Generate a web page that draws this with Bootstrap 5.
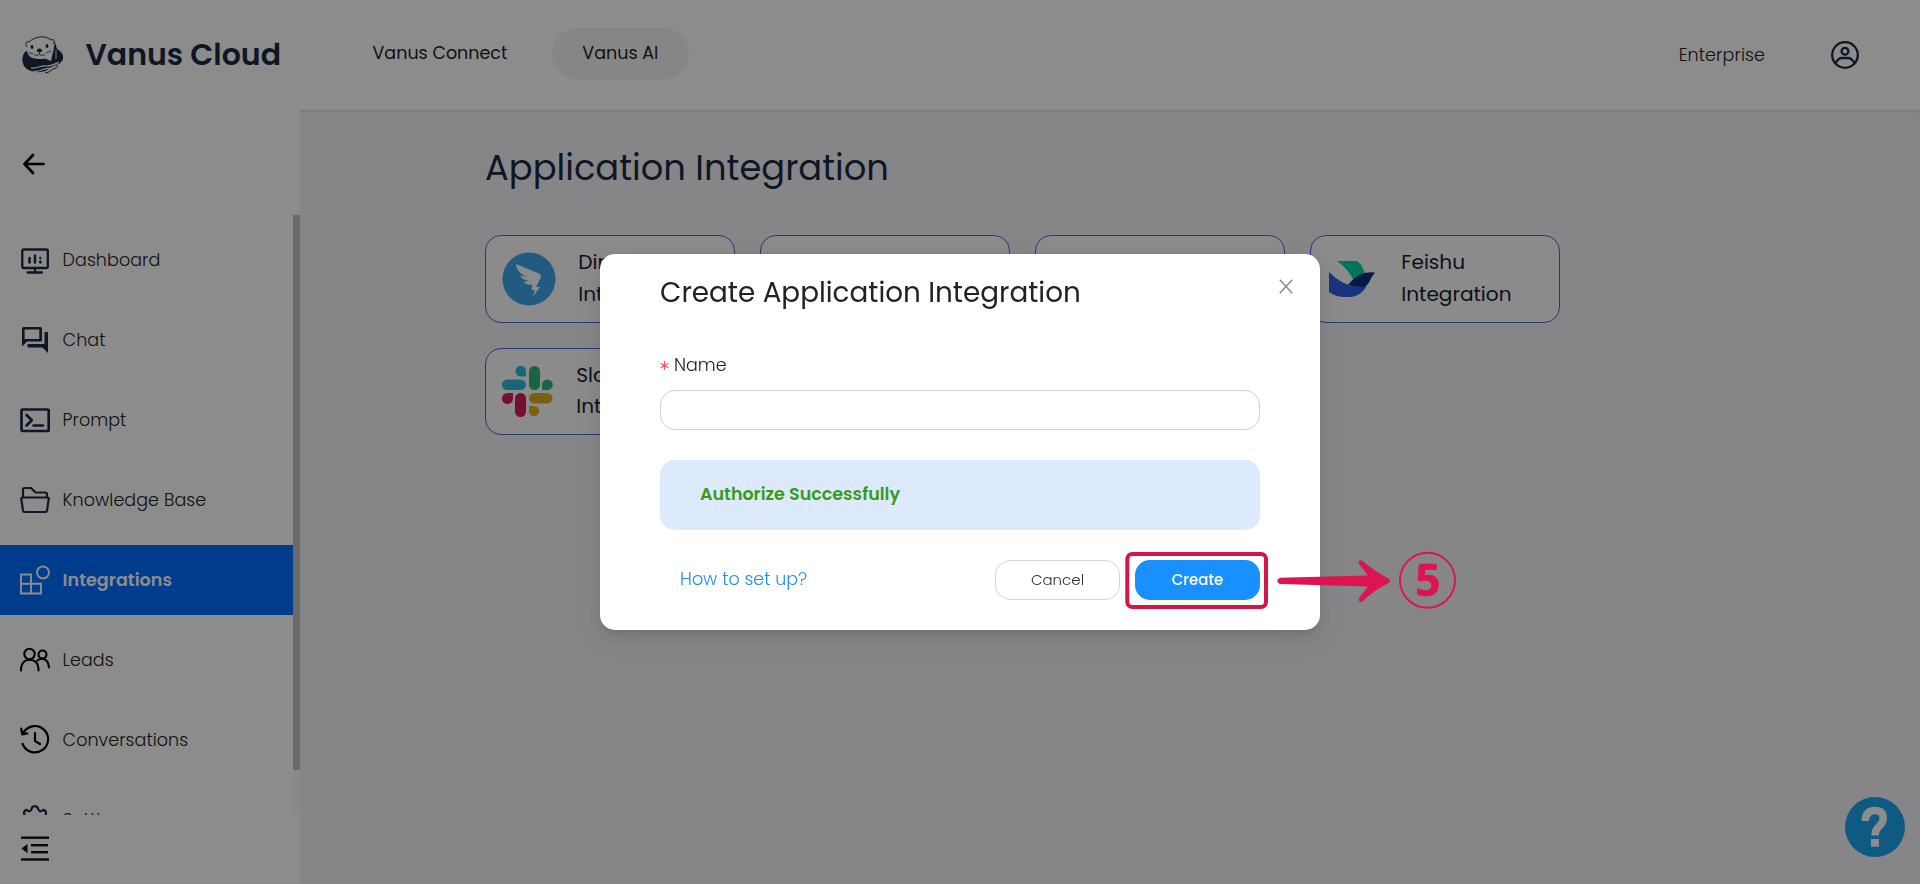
<!DOCTYPE html>
<html lang="en">
<head>
<meta charset="utf-8">
<meta name="viewport" content="width=device-width, initial-scale=1">
<title>Vanus Cloud – Application Integration</title>
<link href="https://cdn.jsdelivr.net/npm/bootstrap@5.3.0/dist/css/bootstrap.min.css" rel="stylesheet">
<style>
  :root { --ink: #1d2a44; }
  body { font-family: Poppins, Inter, "Liberation Sans", sans-serif; font-size: 17.5px; height: 884px; overflow: hidden; background: #f5f5f9; color: #222; }
  svg { display: block; flex: none; }

  /* header */
  .topbar { height: 110px; background: #fff; padding: 0 61px 0 21px; }
  .main-shade { box-shadow: inset 0 3px 3px -1px rgba(0,0,0,.08); }
  .brand-name { font-size: 30px; font-weight: 600; color: var(--ink); margin-left: 21.5px; line-height: 36px; }
  .top-link { color: #222; text-decoration: none; line-height: 26px; }
  .tl-connect { margin-left: 91.5px; margin-top: -4px; }
  .tl-ai { margin-left: 44.5px; margin-top: -3px; width: 137px; height: 51px; border-radius: 26px; background: #f4f4f4; padding-bottom: 1px; }
  .tl-ent { margin-right: 66px; font-weight: 300; letter-spacing: .1px; }

  /* sidebar */
  .side { width: 300px; background: #fff; }
  .back-btn { height: 105px; padding: 3px 0 0 22px; }
  .side-scroll { height: 600px; overflow: hidden; }
  .side-list { width: 293px; padding-top: 10px; gap: 10px; }
  .side-item { height: 70px; flex: none; padding-left: 20px; gap: 12.6px; font-weight: 300; letter-spacing: .06px; color: #222; text-decoration: none; }
  .side-item svg { width: 30px; height: 30px; color: var(--ink); }
  .side-item.dark-ico svg { color: #000; }
  .side-item.current { background: #006dff; color: #fff; font-weight: 600; }
  .side-item.current svg { color: #fff; }
  .track { width: 7px; background: #fafafa; }
  .thumb { height: 555px; background: #c1c1c1; }
  .side-foot { padding: 21px 0 0 21px; }

  /* content */
  .page-area { padding: 33px 0 0 185px; }
  .page-title { font-size: 35.3px; font-weight: 400; line-height: 50px; color: var(--ink); margin: 0; }
  .app-grid { display: grid; grid-template-columns: repeat(4, 250px); gap: 25px; margin-top: 42px; }
  .app-tile { height: 88px; border: 1px solid #4a66e0; border-radius: 16px; background: #fdfdfd; color: #16202f; font-size: 20.1px; line-height: 31.6px; padding: 0 16px 1px; }
  .app-tile .nm { width: 130px; margin-left: 22.3px; }
  .app-tile.short { height: 87px; line-height: 31px; }
  .feishu-mark { margin: 0 2px; }

  /* dialog */
  .modal-backdrop.veil { background: #000; opacity: .45; width: 100%; height: 100%; }
  .modal-dialog.create-dlg { max-width: 720px; width: 720px; margin: 254px 0 0 600px; }
  .create-dlg .modal-content { height: 376px; border: 0; border-radius: 15px; padding: 20px 60px 30px; box-shadow: 0 9px 28px 8px rgba(0,0,0,.06), 0 6px 16px rgba(0,0,0,.09), 0 3px 6px -4px rgba(0,0,0,.12); }
  .dlg-title { font-size: 27.8px; font-weight: 400; line-height: 38px; color: #222; margin: 0; }
  .x-btn { width: 14px; height: 15px; margin: 5px -33px 0 0; color: #8a8a8a; }
  .fld-label { margin: 40px 0 11px; height: 27px; line-height: 27px; font-weight: 300; gap: 5px; color: #222; }
  .fld { height: 40px; border: 1px solid #d0d0d0; border-radius: 15px; }
  .fld:focus { box-shadow: none; }
  .ok-note { height: 70px; margin: 30px 0 0; padding: 0 40px 2px; border: 0; border-radius: 15px; background: #dde9fc; color: #389a1a; font-weight: 600; }
  .dlg-foot { margin-top: 30px; gap: 15px; }
  .how { color: #1e8cf0; text-decoration: none; font-weight: 300; padding: 0 0 1px 20px; }
  .dlg-btn { width: 125px; height: 40px; border-radius: 15px; font-size: 15px; padding: 0; }
  .dlg-btn.cxl { background: #fff; border: 1px solid #d4d4d4; color: #333; font-weight: 300; }
  .dlg-btn.mk { background: #1890ff; border: 0; color: #fff; font-weight: 500; }

  /* overlays */
  .help-fab { position: absolute; left: 1845px; top: 797px; }
  .callout { position: absolute; left: 1120px; top: 545px; z-index: 1100; }
</style>
<script src="https://cdn.jsdelivr.net/npm/bootstrap@5.3.0/dist/js/bootstrap.bundle.min.js"></script>
</head>
<body class="d-flex flex-column">

<header class="topbar d-flex align-items-center">
  <svg width="43" height="40" viewBox="0 0 43 40">
    <path d="M5 16C0 20 0 30 6 34C14 39 24 38 31 32C36 30 43 28 42 21C41 17 38 15 36 14L34 7L30 26Z" fill="#1d2a44"/>
    <path d="M6.500 14C6 9 9 6 13 4C18 1 25 2 29 5C33 8 33 13 32 17C30 22 24 24.500 18 24C10 24 5 20 6.500 14Z" fill="#fff"/>
    <path d="M6 12C4 9 5 6 8 7C14 1 25 0 30 5C33 4 35 6 32 9" fill="none" stroke="#1d2a44"/>
    <path d="M35 15V24" fill="none" stroke="#fff" stroke-width=".8"/>
    <ellipse cx="11" cy="12" rx="1.400" ry="2" fill="#1d2a44"/><ellipse cx="26" cy="11" rx="1.400" ry="2" fill="#1d2a44"/>
    <ellipse cx="18.500" cy="15.500" rx="2.600" ry="2" fill="#1d2a44"/>
    <path d="M18.500 17.500V19.500M13 19.500Q16 21.500 18.500 19.500Q21 21.500 24 19.500M8 18L12 18.500M25 18L30 16" fill="none" stroke="#1d2a44" stroke-width=".8"/>
    <path d="M10 33C17 34 19 30 26 31C31 31 34 29 38 27M12 36C19 38 21 33 28 33.500C32 33 35 31 38 29" fill="none" stroke="#fff" stroke-width="1.200"/>
    <path d="M24 38C29 38 30 34 35 33L37 30" fill="none" stroke="#1d2a44"/>
  </svg>
  <span class="brand-name">Vanus Cloud</span>
  <nav class="d-flex align-items-center">
    <a class="top-link tl-connect" href="#">Vanus Connect</a>
    <a class="top-link tl-ai d-flex align-items-center justify-content-center" href="#">Vanus AI</a>
  </nav>
  <a class="top-link tl-ent ms-auto" href="#">Enterprise</a>
  <svg width="28" height="28" viewBox="0 0 28 28" fill="none" stroke="#1d2a44" stroke-width="2.300">
    <circle cx="14" cy="14" r="12.800"/><circle cx="14" cy="10.300" r="3.400"/><path d="M4.500 22C6.500 18.500 9 17 11 17H17C19 17 21.500 18.500 23.500 22"/>
  </svg>
</header>

<div class="d-flex flex-grow-1">
  <aside class="side d-flex flex-column">
    <div class="back-btn d-flex align-items-center">
      <svg width="24" height="22" viewBox="0 0 24 22" fill="none" stroke="#000" stroke-width="2.700" stroke-linecap="round" stroke-linejoin="round"><path d="M11 2L2.500 11L11 20M2.500 11H21.500"/></svg>
    </div>
    <div class="side-scroll d-flex">
      <nav class="side-list d-flex flex-column">
        <a class="side-item d-flex align-items-center" href="#">
          <svg viewBox="0 0 30 30" fill="none" stroke="currentColor" stroke-width="2.300" stroke-linecap="round"><rect x="2.300" y="4.500" width="25.500" height="18.500" rx="1.500"/><path d="M15 23.500V27M7.500 27.500H22"/><path stroke-width="2.500" d="M9.500 13V17.500M15 10.500V17.500M20.300 16.500V17.500M20.300 13V13.100"/></svg>
          <span>Dashboard</span></a>
        <a class="side-item d-flex align-items-center" href="#">
          <svg viewBox="0 0 30 30" fill="currentColor"><path fill-rule="evenodd" d="M3.500 2H20.500Q22 2 22 3.500V15Q22 16.500 20.500 16.500H7L2 21.500V3.500Q2 2 3.500 2ZM4.600 4.600V14H19.300V4.600Z"/><path d="M24.500 7H28V28L22.500 22.500H8.500Q7.500 22.500 7.500 21.500V19H24.500Z"/></svg>
          <span>Chat</span></a>
        <a class="side-item d-flex align-items-center" href="#">
          <svg viewBox="0 0 30 30" fill="none" stroke="currentColor" stroke-width="2.700" stroke-linecap="round" stroke-linejoin="round"><rect x="1.500" y="4.500" width="27.200" height="21.500" rx="1"/><path d="M6.500 10L11.800 15.300L6.500 20.500M13.500 20.500H23"/></svg>
          <span>Prompt</span></a>
        <a class="side-item d-flex align-items-center" href="#">
          <svg viewBox="0 0 30 30" fill="none" stroke="currentColor" stroke-width="2.200" stroke-linejoin="round"><path d="M3 12V4.500Q3 3 4.500 3H11L15.500 7.500H25Q27 7.500 27 9V12"/><path d="M2.500 12.500H27.500Q29 12.500 28.700 14L27 25.500Q26.800 27 25.500 27H4.500Q3.200 27 3 25.500L1.300 14Q1 12.500 2.500 12.500Z"/></svg>
          <span>Knowledge Base</span></a>
        <a class="side-item current d-flex align-items-center" href="#">
          <svg viewBox="0 0 30 30" fill="none" stroke="currentColor" stroke-width="1.900"><path d="M1 9.500H11V28.500H1ZM1 18.800H21V28.500H1"/><circle cx="23" cy="7.500" r="6"/></svg>
          <span>Integrations</span></a>
        <a class="side-item dark-ico d-flex align-items-center" href="#">
          <svg viewBox="0 0 30 30" fill="none" stroke="currentColor" stroke-width="2.100" stroke-linecap="round"><circle cx="9.500" cy="9" r="5.200"/><circle cx="22.500" cy="9.500" r="4"/><path d="M1 25.500V23.500Q2 15 9.500 14.700Q18 15 18.500 23.500V25.500M17.500 15.500Q19.500 13.800 22.500 13.800Q28.500 14.500 29 22.500"/></svg>
          <span>Leads</span></a>
        <a class="side-item dark-ico d-flex align-items-center" href="#">
          <svg viewBox="0 0 30 30" fill="none" stroke="currentColor" stroke-width="2.200" stroke-linecap="round" stroke-linejoin="round"><path d="M3 8.500A13.200 13.200 0 1 1 2.600 19M1.200 3.500L2.200 9.300L7.200 8.300M15 8V16L20 19"/></svg>
          <span>Conversations</span></a>
        <a class="side-item d-flex align-items-center" href="#">
          <svg viewBox="0 0 30 30" fill="none" stroke="currentColor" stroke-width="2.300"><path d="M4.500 22V18Q7 15 4.500 11Q3 5 7 5Q10.500 8 11.500 4Q12.300 1.200 14.800 1.200Q17.500 1.200 18.200 4Q19.500 8 23 5Q27 5 25.500 11Q23 15 25.500 18V22"/><circle cx="15" cy="15" r="4"/></svg>
          <span>Settings</span></a>
      </nav>
      <div class="track"><div class="thumb"></div></div>
    </div>
    <div class="side-foot">
      <svg width="28" height="26" viewBox="0 0 28 26" fill="#111"><rect y="0.500" width="28" height="2.400"/><rect x="10" y="8" width="17" height="2.400"/><rect x="10" y="15" width="17" height="2.400"/><rect y="22.300" width="28" height="2.400"/><path d="M0.500 12.600L6.500 8V17.200Z"/></svg>
    </div>
  </aside>

  <main class="page-area main-shade flex-grow-1">
    <h1 class="page-title">Application Integration</h1>
    <div class="app-grid">
      <div class="app-tile d-flex align-items-center">
        <svg width="54" height="54" viewBox="0 0 54 54"><circle cx="27" cy="27" r="26.500" fill="#3ea6ec"/><path d="M14 12L37 21.500Q40 23 38.500 26L34 35H38L31 44.500L32.500 38H29.500L30.500 33Q25 33 21.500 30L27 29Q21 28 18 23.500L26 25Q15 22 14 12Z" fill="#fff"/></svg>
        <div class="nm">DingTalk Integration</div>
      </div>
      <div class="app-tile"></div>
      <div class="app-tile"></div>
      <div class="app-tile d-flex align-items-center">
        <svg class="feishu-mark" width="48" height="38" viewBox="0 0 48 38"><path d="M8 1H28Q33 4 35.500 13Q30 15 24.500 19.500Q18 8 8 1Z" fill="#00d6a8"/><path d="M0 12Q10 22 20 25Q30 28 38 25Q32 38 17 37Q6 37 0 32Z" fill="#2f5fe5"/><path d="M19 24.700Q30 10 46 12.500Q43 16 40.500 21.500Q38 26 34 27Q27 27.500 19 24.700Z" fill="#0c2e80"/></svg>
        <div class="nm">Feishu Integration</div>
      </div>
      <div class="app-tile short d-flex align-items-center">
        <svg width="52" height="52" viewBox="0 0 52 52">
          <g fill="#2fb8dc"><rect x="0" y="14.500" width="24" height="10.500" rx="5.200"/><path d="M13.500 6A5.200 5.200 0 0 1 24 6V11.500H19A5.500 5.500 0 0 1 13.500 6Z"/></g>
          <g fill="#2eb67d"><rect x="27" y="1" width="11" height="24" rx="5.500"/><path d="M45.500 14.500A5.200 5.200 0 0 1 45.500 25H40V20A5.500 5.500 0 0 1 45.500 14.500Z"/></g>
          <g fill="#e0b020"><rect x="27" y="28" width="23.500" height="10.500" rx="5.200"/><path d="M27 41H32.500A5.200 5.200 0 1 1 27 46.500Z"/></g>
          <g fill="#d81b58"><rect x="13" y="28" width="11" height="24" rx="5.500"/><path d="M5.500 28H11V33.500A5.500 5.500 0 1 1 5.500 28Z"/></g>
        </svg>
        <div class="nm">Slack Integration</div>
      </div>
    </div>
  </main>
</div>

<div class="help-fab">
  <svg width="60" height="60" viewBox="0 0 60 60"><circle cx="30" cy="30" r="30" fill="#1aa5ea"/><path d="M20.300 24Q20.500 13.500 30 13.500Q38.200 13.500 38.200 21Q38.200 26 34 29.500Q30 33 30 38.500" fill="none" stroke="#fff" stroke-width="7.500"/><rect x="26" y="42" width="8" height="7.700" fill="#fff"/></svg>
</div>

<div class="modal-backdrop veil"></div>

<div class="modal d-block" tabindex="-1" role="dialog">
  <div class="modal-dialog create-dlg">
    <div class="modal-content">
      <div class="d-flex justify-content-between align-items-start">
        <h2 class="dlg-title text-nowrap">Create Application Integration</h2>
        <svg class="x-btn" viewBox="0 0 14 15" fill="none" stroke="currentColor" stroke-width="1.500"><path d="M.8 .8L13.200 14.200M13.200 .8L.8 14.200"/></svg>
      </div>
      <div class="fld-label d-flex align-items-center">
        <svg width="9" height="9" viewBox="0 0 9 9" stroke="#ff4d60" stroke-width="1.100"><path d="M4.500 0V9M.6 2.250L8.400 6.750M8.400 2.250L.6 6.750"/></svg>
        <label for="app-name">Name</label>
      </div>
      <input id="app-name" type="text" class="form-control fld">
      <div class="alert ok-note d-flex align-items-center">Authorize Successfully</div>
      <div class="dlg-foot d-flex align-items-center">
        <a class="how me-auto" href="#">How to set up?</a>
        <button type="button" class="btn dlg-btn cxl">Cancel</button>
        <button type="button" class="btn dlg-btn mk">Create</button>
      </div>
    </div>
  </div>
</div>

<!-- step marker: frame, arrow and number -->
<svg class="callout" width="350" height="70" viewBox="1120 545 350 70">
  <rect x="1127.300" y="554" width="138.700" height="53" rx="5" fill="none" stroke="#d31645" stroke-width="4"/>
  <path d="M1280 577.800L1368 575.500L1359 564Q1358 559.500 1362 560.500Q1374 571 1388.500 578.500Q1391.500 581 1388.500 583Q1374 590 1362 602Q1358 602.500 1359 598L1368 586.500L1280 584Q1274.500 581 1280 577.800Z" fill="#dc1450"/>
  <circle cx="1427.500" cy="580.300" r="27.500" fill="none" stroke="#dc1450" stroke-width="1.900"/>
  <text x="1427.800" y="595.500" text-anchor="middle" font-family="Noto Sans, Open Sans, sans-serif" font-weight="700" font-size="44" fill="#dc1450" stroke="#dc1450" stroke-width=".7">5</text>
</svg>
</body>
</html>
